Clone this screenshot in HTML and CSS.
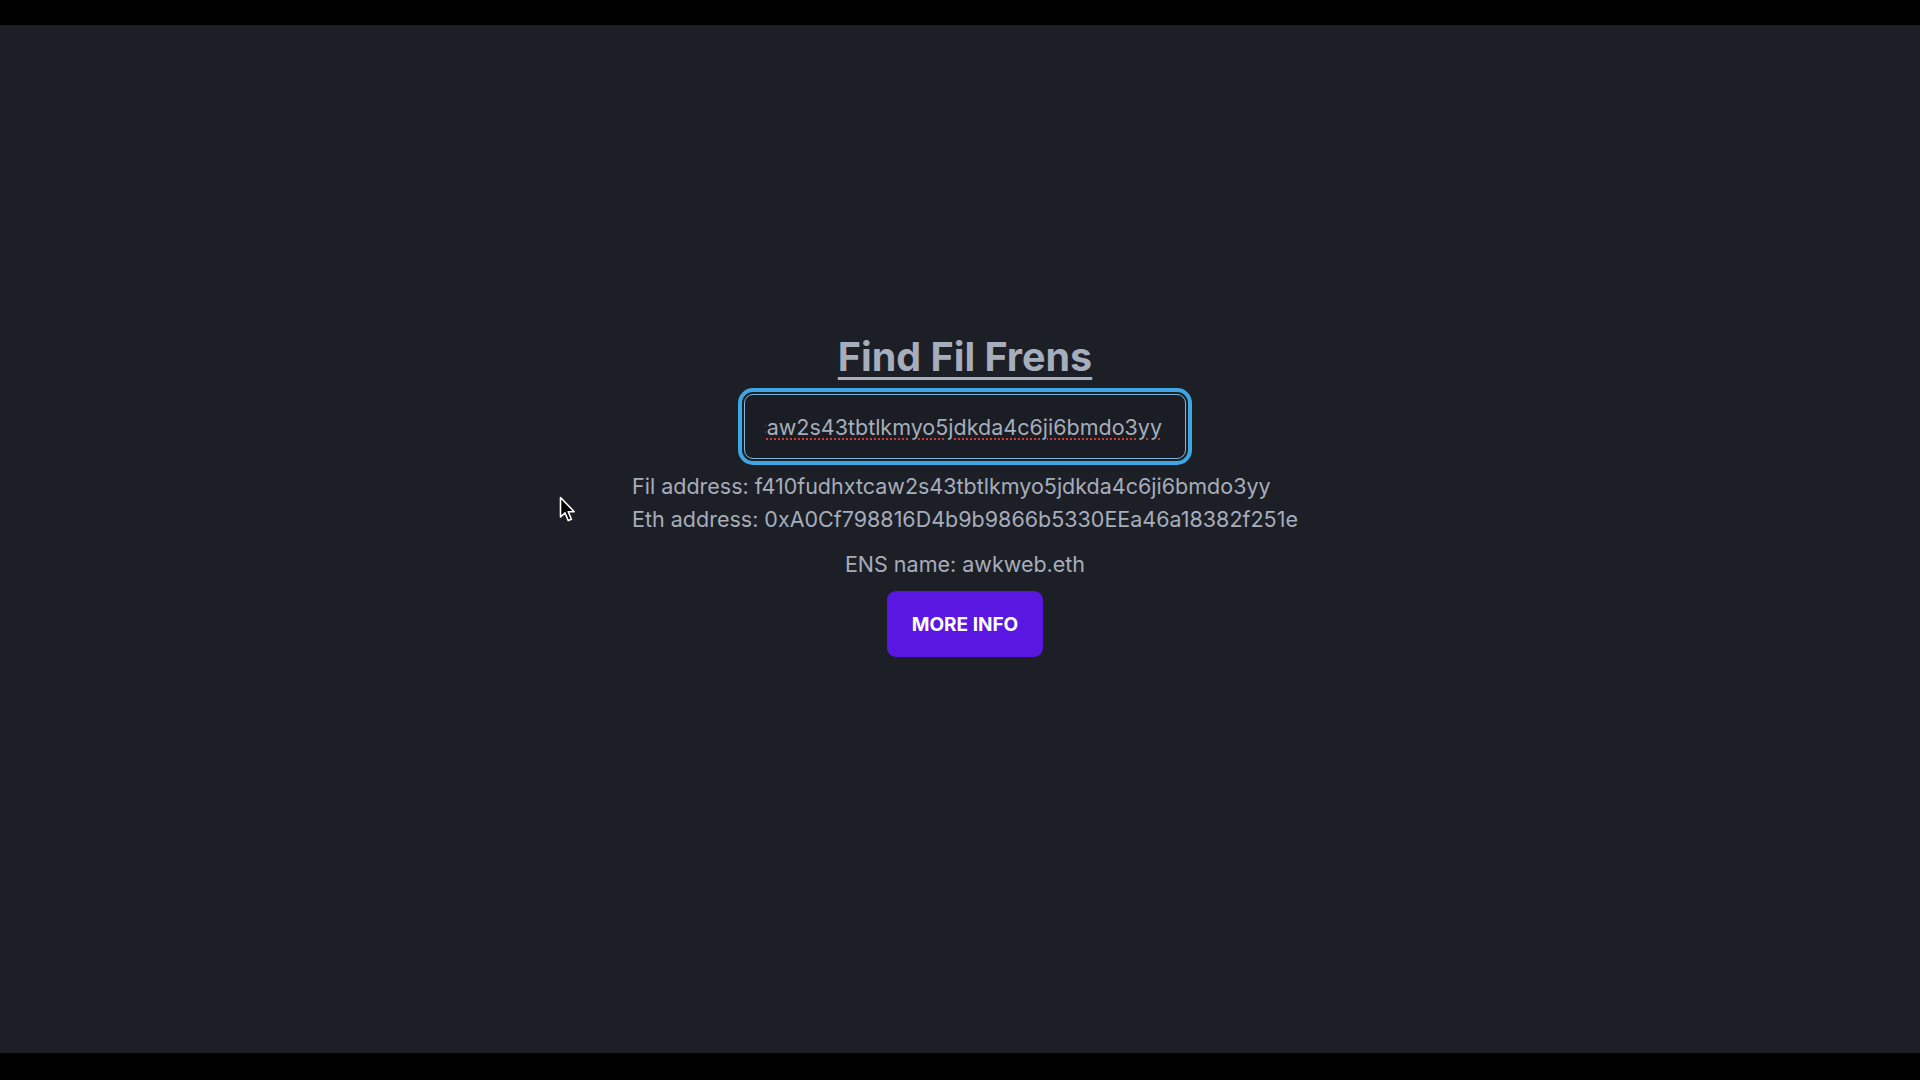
FILE: index.html
```html
<!DOCTYPE html>
<html lang="en">
<head>
    <meta charset="UTF-8">
    <meta name="viewport" content="width=device-width, initial-scale=1.0">
    <title>Find Fil Frens</title>
    <link rel="stylesheet" href="styles.css">
</head>
<body>
    <div class="bar-top"></div>

    <main class="page">
        <div class="container">
            <h1><a href="#" class="title">Find Fil Frens</a></h1>

            <div class="search">
                <div class="search-clip">
                    <span class="search-value">f410fudhxtcaw2s43tbtlkmyo5jdkda4c6ji6bmdo3yy</span>
                </div>
            </div>

            <div class="addresses">
                <p>Fil address: f410fudhxtcaw2s43tbtlkmyo5jdkda4c6ji6bmdo3yy</p>
                <p>Eth address: 0xA0Cf798816D4b9b9866b5330EEa46a18382f251e</p>
            </div>

            <p class="ens">ENS name: awkweb.eth</p>

            <button type="button" class="btn-primary">More info</button>
        </div>

        <svg class="cursor" width="18" height="27" viewBox="0 0 18 27">
            <path d="M1.5 1.5 L1.5 21 L6 16.8 L9.3 24.6 L12.4 23.3 L9.2 15.7 L15.2 15.7 Z" fill="#000" stroke="#fff" stroke-width="1.6" stroke-linejoin="round"/>
        </svg>
    </main>

    <div class="bar-bottom"></div>
</body>
</html>
```

FILE: styles.css
```css
html, body {
    margin: 0;
    height: 100%;
}
body {
    display: flex;
    flex-direction: column;
    background-color: #000;
    font-family: Inter, "Noto Sans", sans-serif;
    color: #a6adbb;
}
.bar-top {
    height: 25px;
    background-color: #000;
}
.bar-bottom {
    height: 27px;
    background-color: #000;
}
.page {
    position: relative;
    flex: 1;
    background-color: #1d1f27;
}
.container {
    display: flex;
    flex-direction: column;
    align-items: center;
    padding-top: 310px;
    padding-left: 10px;
}
h1 {
    margin: 0;
    font-size: 39.5px;
    line-height: 44px;
    font-weight: 700;
}
.title {
    color: #a6adbb;
    text-decoration: underline;
    text-decoration-thickness: 3px;
    text-underline-offset: 6px;
}
.search {
    margin-top: 15px;
    width: 442px;
    height: 65px;
    box-sizing: border-box;
    padding: 0 23px 0 20px;
    display: flex;
    align-items: center;
    border: 1.5px solid #7fb6d9;
    border-radius: 9px;
    outline: 4px solid #3ea6e4;
    outline-offset: 2px;
    background-color: #1b1d24;
}
.search-clip {
    flex: 1;
    display: flex;
    justify-content: flex-end;
    overflow: hidden;
    white-space: nowrap;
}
.search-value {
    font-size: 21.5px;
    line-height: 30px;
    color: #a6adbb;
    text-decoration: underline dotted #d23a3a;
    text-decoration-thickness: 2px;
    text-underline-offset: 4px;
}
.addresses {
    margin-top: 11px;
    text-align: left;
}
.addresses p {
    margin: 0;
    font-size: 21.5px;
    line-height: 33px;
}
.ens {
    margin: 12px 0 0;
    font-size: 21.5px;
    line-height: 33px;
}
.btn-primary {
    margin-top: 10px;
    width: 156px;
    height: 66px;
    border: none;
    border-radius: 9px;
    background-color: #5a17e2;
    color: #fff;
    font-family: Inter, "Noto Sans", sans-serif;
    font-size: 19px;
    font-weight: 700;
    text-transform: uppercase;
    cursor: pointer;
}
.cursor {
    position: absolute;
    left: 559px;
    top: 471px;
}
```
